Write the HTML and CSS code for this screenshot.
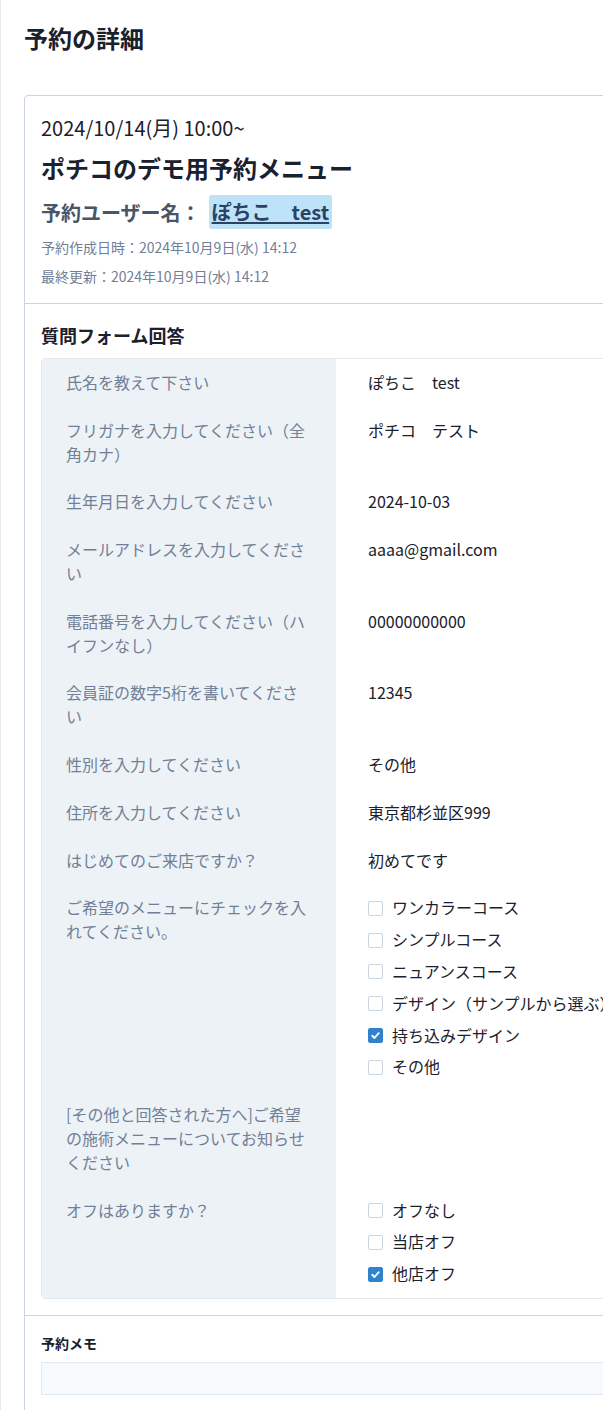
FILE: index.html
```html
<!DOCTYPE html>
<html lang="ja">
<head>
  <meta charset="UTF-8" />
  <meta name="viewport" content="width=device-width, initial-scale=1.0"/>
  <title>予約の詳細</title>
  <link rel="stylesheet" href="styles.css">
</head>
<body>
  <main class="page">
    <h1 class="page-title">予約の詳細</h1>

    <div class="card">
      <section class="card-head">
        <div class="date">2024/10/14(月) 10:00~</div>
        <h2 class="menu-name">ポチコのデモ用予約メニュー</h2>
        <div class="user-row">
          <span class="user-label">予約ユーザー名：</span>
          <a class="user-link" href="#">ぽちこ　test</a>
        </div>
        <p class="meta">予約作成日時：2024年10月9日(水) 14:12</p>
        <p class="meta">最終更新：2024年10月9日(水) 14:12</p>
      </section>

      <section class="card-section">
        <h3 class="section-title">質問フォーム回答</h3>
        <table class="answers">
          <tr>
            <th>氏名を教えて下さい</th>
            <td>ぽちこ　test</td>
          </tr>
          <tr>
            <th>フリガナを入力してください（全角カナ）</th>
            <td>ポチコ　テスト</td>
          </tr>
          <tr>
            <th>生年月日を入力してください</th>
            <td>2024-10-03</td>
          </tr>
          <tr>
            <th>メールアドレスを入力してください</th>
            <td>aaaa@gmail.com</td>
          </tr>
          <tr>
            <th>電話番号を入力してください（ハイフンなし）</th>
            <td>00000000000</td>
          </tr>
          <tr>
            <th>会員証の数字5桁を書いてください</th>
            <td>12345</td>
          </tr>
          <tr>
            <th>性別を入力してください</th>
            <td>その他</td>
          </tr>
          <tr>
            <th>住所を入力してください</th>
            <td>東京都杉並区999</td>
          </tr>
          <tr>
            <th>はじめてのご来店ですか？</th>
            <td>初めてです</td>
          </tr>
          <tr>
            <th>ご希望のメニューにチェックを入れてください。</th>
            <td>
              <ul class="checks">
                <li><span class="box"></span>ワンカラーコース</li>
                <li><span class="box"></span>シンプルコース</li>
                <li><span class="box"></span>ニュアンスコース</li>
                <li><span class="box"></span>デザイン（サンプルから選ぶ）</li>
                <li><span class="box checked"><svg viewBox="0 0 14 14"><path d="M3.5 7.3l2.4 2.4 4.6-5.2" /></svg></span>持ち込みデザイン</li>
                <li><span class="box"></span>その他</li>
              </ul>
            </td>
          </tr>
          <tr>
            <th>[その他と回答された方へ]ご希望の施術メニューについてお知らせください</th>
            <td></td>
          </tr>
          <tr>
            <th>オフはありますか？</th>
            <td>
              <ul class="checks">
                <li><span class="box"></span>オフなし</li>
                <li><span class="box"></span>当店オフ</li>
                <li><span class="box checked"><svg viewBox="0 0 14 14"><path d="M3.5 7.3l2.4 2.4 4.6-5.2" /></svg></span>他店オフ</li>
              </ul>
            </td>
          </tr>
        </table>
      </section>

      <section class="card-section memo-section">
        <h4 class="memo-title">予約メモ</h4>
        <div class="memo-box"></div>
      </section>
    </div>
  </main>
</body>
</html>
```

FILE: styles.css
```css
:root {
  --text: #1a202c;
  --muted: #718096;
  --line: #cbd5e0;
  --soft-line: #e2e8f0;
  --label-bg: #edf2f7;
  --accent: #3182ce;
}
* { box-sizing: border-box; margin: 0; padding: 0; }
html, body { overflow: hidden; }
body {
  font-family: "Noto Sans CJK JP", "Noto Sans", sans-serif;
  color: var(--text);
  background: #ffffff;
}
.page {
  width: 960px;
  min-height: 1410px;
  padding: 20px 0 0 24px;
  border-left: 1px solid #e5e9ef;
}
.page-title {
  font-size: 24px;
  line-height: 36px;
  font-weight: 700;
  margin-left: -1px;
}
.card {
  margin-top: 39px;
  margin-left: -1px;
  border: 1px solid var(--line);
  border-radius: 4px;
}
.card-head {
  padding: 18px 16px 16px;
  border-bottom: 1px solid var(--line);
}
.date { font-size: 20px; line-height: 28px; }
.menu-name {
  font-size: 24px;
  line-height: 32px;
  font-weight: 700;
  margin-top: 10px;
}
.user-row {
  display: flex;
  align-items: center;
  gap: 8px;
  margin-top: 11px;
  height: 34px;
}
.user-label { font-size: 20px; font-weight: 700; color: #4a5568; }
.user-link {
  font-size: 20px;
  font-weight: 700;
  line-height: 34px;
  color: #2a4365;
  background: #bee3f8;
  padding: 0 3px;
  border-radius: 2px;
  text-decoration: underline;
  text-decoration-thickness: 2px;
  text-underline-offset: 2px;
}
.meta {
  font-size: 14px;
  line-height: 21px;
  color: var(--muted);
  margin-top: 8px;
}
.card-section {
  padding: 17px 16px 16px;
  border-bottom: 1px solid var(--line);
}
.section-title {
  font-size: 18px;
  line-height: 28px;
  font-weight: 700;
  margin-bottom: 9px;
}
.answers {
  width: 100%;
  border-collapse: separate;
  border-spacing: 0;
  border: 1px solid var(--soft-line);
  border-radius: 4px;
  font-size: 16px;
  line-height: 23.8px;
}
.answers th {
  width: 294px;
  padding: 12px 24px;
  background: var(--label-bg);
  color: var(--muted);
  font-weight: 400;
  text-align: left;
  vertical-align: top;
}
.answers td {
  padding: 12px 32px;
  vertical-align: top;
  white-space: nowrap;
}
.answers tr:first-child th { border-top-left-radius: 4px; }
.answers tr:last-child th { border-bottom-left-radius: 4px; }
.checks { list-style: none; display: flex; flex-direction: column; gap: 8px; }
.checks li { display: flex; align-items: center; gap: 9px; }
.box {
  width: 15px;
  height: 15px;
  border: 1px solid var(--line);
  border-radius: 2px;
  background: #ffffff;
  display: inline-flex;
}
.box.checked { background: var(--accent); border-color: var(--accent); }
.box svg { width: 100%; height: 100%; }
.box path { fill: none; stroke: #ffffff; stroke-width: 2; stroke-linecap: round; stroke-linejoin: round; }
.memo-section { border-bottom: none; padding-bottom: 40px; }
.memo-title { font-size: 14px; line-height: 20px; font-weight: 700; margin-bottom: 9px; }
.memo-box {
  height: 33px;
  background: #f7fafc;
  border: 1px solid var(--soft-line);
}
```
